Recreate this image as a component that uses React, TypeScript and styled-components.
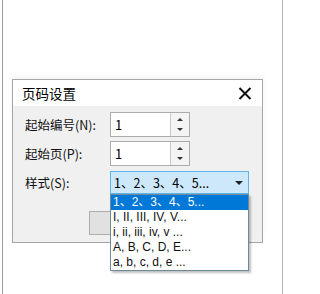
import styled, { createGlobalStyle } from "styled-components";

const GlobalStyle = createGlobalStyle`
  html, body {
    margin: 0;
    padding: 0;
    background: #ffffff;
  }
  body {
    font-family: "Noto Sans CJK SC", "Noto Sans", sans-serif;
    color: #000;
  }
`;

const Page = styled.div`
  width: 281px;
  height: 294px;
  margin-left: 2px;
  border-left: 1px solid #9a9a9a;
  border-right: 1px solid #b4b4b4;
  padding: 79px 0 0 9px;
  box-sizing: border-box;
`;

const Dialog = styled.div`
  width: 251px;
  height: 164px;
  border: 1px solid #a6a6a6;
  box-sizing: border-box;
  background: #f0f0f0;
  display: flex;
  flex-direction: column;
  box-shadow: 0 -4px 6px rgba(0, 0, 0, 0.04);
`;

const TitleBar = styled.div`
  height: 26px;
  background: #ffffff;
  display: flex;
  align-items: center;
  justify-content: space-between;
  padding: 0 10px 0 9px;
  font-size: 13.5px;
`;

const Body = styled.div`
  flex: 1;
  padding: 6px 0 0 12px;
  display: flex;
  flex-direction: column;
  gap: 4px;
`;

const Row = styled.div<{ $gap?: number }>`
  display: flex;
  align-items: center;
  margin-top: ${(p) => p.$gap ?? 0}px;
`;

const Label = styled.div`
  width: 85px;
  font-size: 12.5px;
  color: #111;
`;

const Spin = styled.div`
  width: 80px;
  height: 25px;
  display: flex;
  border: 1px solid #acacac;
  box-sizing: border-box;
  background: #fff;
`;

const SpinText = styled.div`
  flex: 1;
  font-size: 13px;
  padding-left: 4px;
  line-height: 23px;
`;

const SpinButtons = styled.div`
  width: 18px;
  border-left: 1px solid #c8c8c8;
  background: #f4f4f4;
  display: flex;
  flex-direction: column;
  align-items: center;
  justify-content: space-around;
  padding: 2px 0;
`;

const Arrow = styled.div<{ $down?: boolean }>`
  width: 0;
  height: 0;
  border-left: 3px solid transparent;
  border-right: 3px solid transparent;
  ${(p) =>
    p.$down ? "border-top: 3px solid #333;" : "border-bottom: 3px solid #333;"}
`;

const SelectWrap = styled.div`
  position: relative;
`;

const Select = styled.div`
  width: 139px;
  height: 23px;
  box-sizing: border-box;
  border: 1px solid #5fb6e6;
  background: #cde8fb;
  display: flex;
  align-items: center;
  justify-content: space-between;
  padding: 0 5px 0 3px;
  font-size: 12.5px;
`;

const DropArrow = styled.div`
  width: 0;
  height: 0;
  border-left: 4px solid transparent;
  border-right: 4px solid transparent;
  border-top: 4px solid #222;
`;

const List = styled.div`
  position: absolute;
  top: 100%;
  left: 0;
  width: 139px;
  box-sizing: border-box;
  border: 1px solid #6f8a99;
  background: #fff;
  box-shadow: 2px 2px 2px rgba(0, 0, 0, 0.25);
  z-index: 2;
`;

const Item = styled.div<{ $active?: boolean }>`
  height: 15px;
  line-height: 15px;
  font-family: "Liberation Sans", "Noto Sans CJK SC", sans-serif;
  font-size: 12px;
  padding-left: 2px;
  background: ${(p) => (p.$active ? "#0078d7" : "#fff")};
  color: ${(p) => (p.$active ? "#fff" : "#111")};
  white-space: nowrap;
  overflow: hidden;
`;

const Buttons = styled.div`
  display: flex;
  gap: 7px;
  margin: 13px 0 0 64px;
`;

const Button = styled.div`
  width: 75px;
  height: 24px;
  box-sizing: border-box;
  border: 1px solid #adadad;
  background: #e1e1e1;
`;

const styles = [
  "1、2、3、4、5...",
  "I, II, III, IV, V...",
  "i, ii, iii, iv, v ...",
  "A, B, C, D, E...",
  "a, b, c, d, e ...",
];

function CloseIcon() {
  return (
    <svg width="14" height="13" viewBox="0 0 14 13">
      <path d="M1.5 1 L12.5 12 M12.5 1 L1.5 12" stroke="#111" strokeWidth="2" />
    </svg>
  );
}

function SpinBox({ value }: { value: string }) {
  return (
    <Spin>
      <SpinText>{value}</SpinText>
      <SpinButtons>
        <Arrow />
        <Arrow $down />
      </SpinButtons>
    </Spin>
  );
}

export default function App() {
  return (
    <Page>
      <GlobalStyle />
      <Dialog>
        <TitleBar>
          <span>页码设置</span>
          <CloseIcon />
        </TitleBar>
        <Body>
          <Row>
            <Label>起始编号(N):</Label>
            <SpinBox value="1" />
          </Row>
          <Row>
            <Label>起始页(P):</Label>
            <SpinBox value="1" />
          </Row>
          <Row $gap={1}>
            <Label>样式(S):</Label>
            <SelectWrap>
              <Select>
                <span>{styles[0]}</span>
                <DropArrow />
              </Select>
              <List>
                {styles.map((s, i) => (
                  <Item key={s} $active={i === 0}>
                    {s}
                  </Item>
                ))}
              </List>
            </SelectWrap>
          </Row>
          <Buttons>
            <Button />
            <Button />
          </Buttons>
        </Body>
      </Dialog>
    </Page>
  );
}
